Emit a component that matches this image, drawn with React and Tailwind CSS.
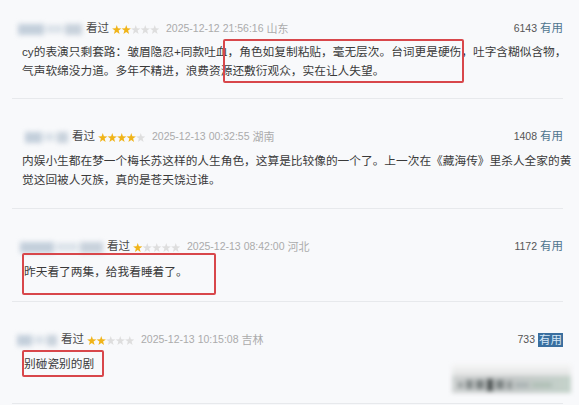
import React from "react";

const FONT = "font-['Liberation_Sans','Noto_Sans_CJK_SC',sans-serif]";

const comments = [
  {
    id: 1,
    rating: 2,
    time: "2025-12-12 21:56:16",
    place: "山东",
    votes: "6143",
    user: { ml: "ml-[6px]", w: "w-[64px]" },
    rowPad: "pt-[19px] pb-[18px]",
    bodyPad: "pl-[10px] mt-[3px]",
    lines: [
      "cy的表演只剩套路：皱眉隐忍+同款吐血，角色如复制粘贴，毫无层次。台词更是硬伤，吐字含糊似含物，",
      "气声软绵没力道。多年不精进，浪费资源还敷衍观众，实在让人失望。",
    ],
  },
  {
    id: 2,
    rating: 4,
    time: "2025-12-13 00:32:55",
    place: "湖南",
    votes: "1408",
    user: { ml: "ml-[13px]", w: "w-[43px]" },
    rowPad: "pt-[28px] pb-[19px]",
    bodyPad: "pl-[10px] mt-[4px]",
    lines: [
      "内娱小生都在梦一个梅长苏这样的人生角色，这算是比较像的一个了。上一次在《藏海传》里杀人全家的黄",
      "觉这回被人灭族，真的是苍天饶过谁。",
    ],
  },
  {
    id: 3,
    rating: 1,
    time: "2025-12-13 08:42:00",
    place: "河北",
    votes: "1172",
    user: { ml: "ml-[8px]", w: "w-[83px]" },
    rowPad: "pt-[28px] pb-[20px]",
    bodyPad: "pl-[12px] mt-[5px]",
    lines: ["昨天看了两集，给我看睡着了。"],
  },
  {
    id: 4,
    rating: 2,
    time: "2025-12-13 10:15:08",
    place: "吉林",
    votes: "733",
    highlight: true,
    user: { ml: "ml-[5px]", w: "w-[40px]" },
    rowPad: "pt-[28px] pb-[30px]",
    bodyPad: "pl-[12px] mt-[4px]",
    lines: ["别碰瓷别的剧"],
  },
];

function Stars({ value }) {
  const pts =
    "4.75,0 5.9,3.3 9.4,3.4 6.6,5.5 7.6,8.9 4.75,6.9 1.9,8.9 2.9,5.5 0.1,3.4 3.6,3.3";
  return (
    <svg width="47" height="9" viewBox="0 0 47 9" className="shrink-0">
      {[0, 1, 2, 3, 4].map((i) => (
        <polygon
          key={i}
          points={pts}
          transform={`translate(${i * 9.5} 0)`}
          fill={i < value ? "#f0b419" : "#dedede"}
        />
      ))}
    </svg>
  );
}

// blurred user name, as in the photo
function BlurName({ ml, w }) {
  return (
    <div className={`${ml} ${w} h-[13px] flex items-center gap-[2px] blur-[2.5px] shrink-0`}>
      <span className="h-[11px] flex-[3] bg-[#c3cfdb]" />
      <span className="h-[8px] flex-[2] bg-[#dbe2e9]" />
      <span className="h-[11px] flex-[2] bg-[#c8d2dc]" />
    </div>
  );
}

function Comment({ c }) {
  return (
    <div className={`flex flex-col border-b border-[#e7e9ec] ${c.rowPad}`}>
      <div className="h-[20px] flex items-center">
        <BlurName {...c.user} />
        <span className="ml-[4px] text-[11.5px] text-[#4a4a4a]">看过</span>
        <span className="ml-[3px]">
          <Stars value={c.rating} />
        </span>
        <span className="ml-[7px] text-[10.5px] text-[#ababab]">{c.time}</span>
        <span className="ml-[3px] text-[11px] text-[#ababab]">{c.place}</span>
        <span className="ml-auto flex items-center gap-[3px]">
          <span className="text-[10.5px] text-[#555555]">{c.votes}</span>
          <span
            className={
              c.highlight
                ? "text-[11.5px] leading-[14px] px-[1px] bg-[#3a6f9f] text-[#d6e7f6]"
                : "text-[11.5px] text-[#50768f]"
            }
          >
            有用
          </span>
        </span>
      </div>
      <div className={`flex flex-col ${c.bodyPad}`}>
        {c.lines.map((l, i) => (
          <p key={i} className="text-[11.7px] leading-[19px] text-[#3a3a3a] whitespace-nowrap">
            {l}
          </p>
        ))}
      </div>
    </div>
  );
}

export default function App() {
  return (
    <div className={`relative w-[579px] h-[405px] overflow-hidden bg-[#f8f9fb] ${FONT}`}>
      <div className="pl-[12px] pr-[16px]">
        {comments.map((c) => (
          <Comment key={c.id} c={c} />
        ))}
      </div>

      {/* red marks drawn over the screenshot */}
      <div className="absolute left-[223px] top-[39px] w-[241px] h-[44px] border-[2.5px] border-[#d8474b] rounded-[2px]" />
      <div className="absolute left-[22px] top-[253px] w-[194px] h-[42px] border-[2.5px] border-[#d8474b] rounded-[2px]" />
      <div className="absolute left-[22px] top-[350px] w-[82px] h-[27px] border-[2.5px] border-[#d8474b] rounded-[2px]" />

      {/* blurry watermark */}
      <div className="absolute left-[452px] top-[364px] w-[119px] h-[29px] blur-[2px] flex flex-col">
        <div className="h-[12px] bg-gradient-to-b from-[#f6f6f6] to-[#e2e3e3]" />
        <div className="flex-1 flex items-center gap-[3px] px-[6px] bg-gradient-to-r from-[#cdd0d0] via-[#c2c6c6] to-[#c4d2ca]">
          <span className="w-[5px] h-[6px] bg-[#9aa0a0]" />
          <span className="w-[7px] h-[9px] bg-[#858c8c]" />
          <span className="w-[8px] h-[9px] bg-[#7a8181]" />
          <span className="w-[6px] h-[12px] bg-[#4e5454]" />
          <span className="w-[8px] h-[9px] bg-[#7d8484]" />
          <span className="w-[5px] h-[8px] bg-[#8f9696]" />
          <span className="w-[14px] h-[4px] bg-[#a7b0b0]" />
          <span className="w-[20px] h-[4px] bg-[#adbeb4]" />
        </div>
      </div>
    </div>
  );
}
